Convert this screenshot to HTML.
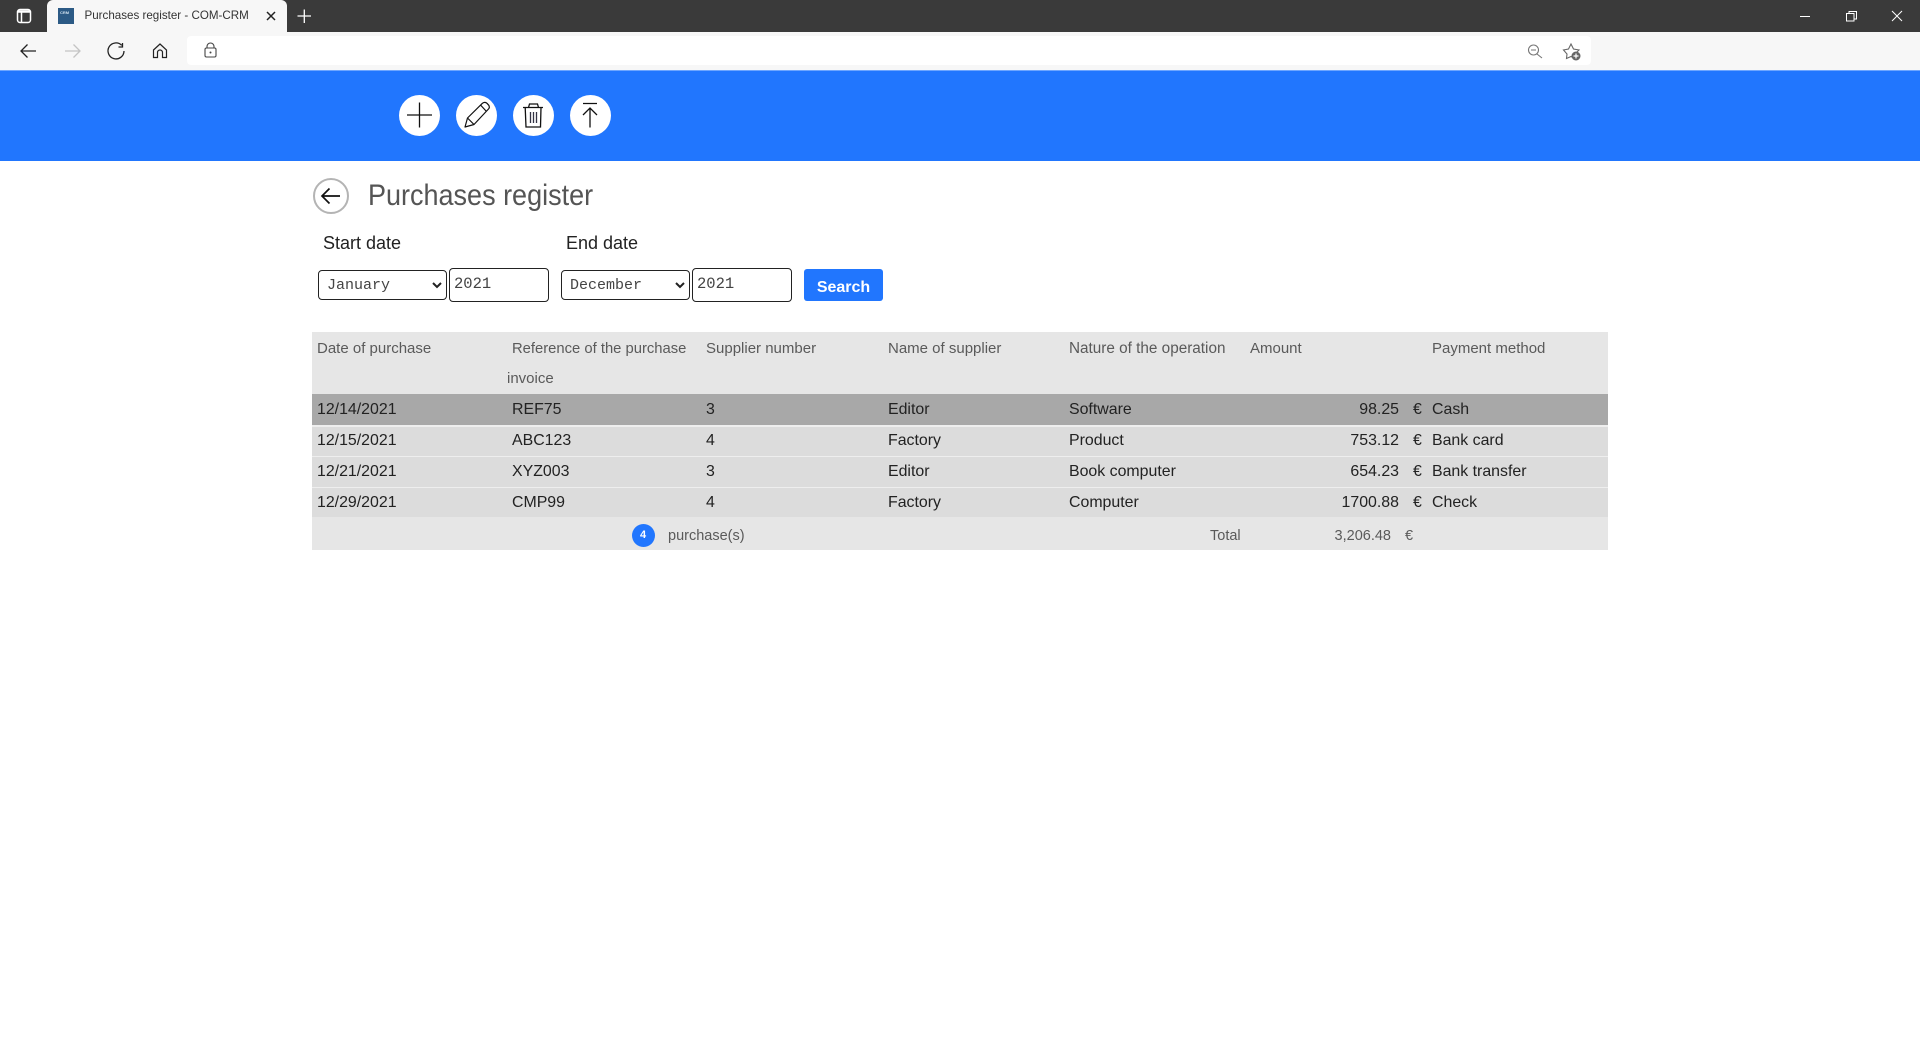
<!DOCTYPE html>
<html><head><meta charset="utf-8"><title>Purchases register - COM-CRM</title>
<style>
html,body{margin:0;padding:0;width:1920px;height:1040px;overflow:hidden;background:#fff;font-family:"Liberation Sans",sans-serif}
div,span{position:absolute;white-space:nowrap}
.h{font-size:15px;color:#5a5a5a;line-height:20px;height:20px}
.f{font-size:14.5px;color:#5a5a5a;line-height:20px;height:20px}
.d{font-size:15.9px;color:#222;line-height:20px;height:20px}
.r{text-align:right}
.sel,.inp{box-sizing:border-box;border:1.5px solid #222;background:#fff;font-family:"Liberation Mono",monospace;color:#444}
.sel{border-radius:4px;height:30px;top:270px;line-height:29px;padding-left:8px;font-size:15px}
.inp{border-radius:4px;height:34px;top:268px;line-height:31px;padding-left:4px;font-size:15.5px}
svg{position:absolute;left:0;top:0}
</style></head><body>
<div style="left:0;top:0;width:1920px;height:32px;background:#3a3a3a"></div>
<div style="left:47px;top:0;width:240px;height:32px;background:#f7f7f7;border-radius:6px 6px 0 0"></div>
<div style="left:58px;top:8px;width:16px;height:16px;background:#2c5a85"></div>
<div style="left:60px;top:10px;font-size:4px;color:#cfe0ee;font-weight:bold">CRM</div>
<div style="left:84.5px;top:8px;font-size:11.6px;line-height:16px;color:#333">Purchases register - COM-CRM</div>
<div style="left:0;top:32px;width:1920px;height:38px;background:#f7f7f7"></div>
<div style="left:187px;top:36px;width:1404px;height:29px;background:#fff;border-radius:4px"></div>
<div style="left:0;top:70px;width:1920px;height:91px;background:#2176fe"></div>
<div style="left:0;top:70px;width:1920px;height:1px;background:#6ea6ff"></div>

<div style="left:399px;top:94.5px;width:41px;height:41px;border-radius:50%;background:#fff"></div>
<div style="left:455.5px;top:94.5px;width:41px;height:41px;border-radius:50%;background:#fff"></div>
<div style="left:512.5px;top:94.5px;width:41px;height:41px;border-radius:50%;background:#fff"></div>
<div style="left:569.5px;top:94.5px;width:41px;height:41px;border-radius:50%;background:#fff"></div>
<div style="left:313px;top:178px;width:32px;height:32px;border-radius:50%;border:2px solid #b4b4b4;background:#fff"></div>

<div style="left:368px;top:178px;font-size:30px;line-height:36px;color:#555;transform:scaleX(.9);transform-origin:left center">Purchases register</div>
<div style="left:323px;top:232px;font-size:18px;line-height:22px;color:#222">Start date</div>
<div style="left:566px;top:232px;font-size:18px;line-height:22px;color:#222">End date</div>

<div class="sel" style="left:318px;width:129px">January</div>
<div class="inp" style="left:449px;width:100px">2021</div>
<div class="sel" style="left:561px;width:129px">December</div>
<div class="inp" style="left:692px;width:100px">2021</div>
<div style="left:804px;top:269px;width:79px;height:32px;background:#2176fe;border-radius:3px;color:#fff;font-weight:bold;font-size:16px;line-height:38px;text-align:center">Search</div>

<div style="left:312px;top:332px;width:1296px;height:62px;background:#e6e6e6"></div>
<div style="left:312px;top:394px;width:1296px;height:31px;background:#a8a8a8"></div>
<div style="left:312px;top:425px;width:1296px;height:2px;background:#eee"></div>
<div style="left:312px;top:427px;width:1296px;height:29px;background:#dcdcdc"></div>
<div style="left:312px;top:456px;width:1296px;height:1px;background:#eee"></div>
<div style="left:312px;top:457px;width:1296px;height:30px;background:#dcdcdc"></div>
<div style="left:312px;top:487px;width:1296px;height:1px;background:#eee"></div>
<div style="left:312px;top:488px;width:1296px;height:29px;background:#dcdcdc"></div>
<div style="left:312px;top:517px;width:1296px;height:33px;background:#e6e6e6"></div>

<div class="h" style="left:317px;top:339px">Date of purchase</div>
<div class="h" style="left:512px;top:339px;font-size:14.8px">Reference of the purchase</div>
<div class="h" style="left:507px;top:369px">invoice</div>
<div class="h" style="left:706px;top:339px">Supplier number</div>
<div class="h" style="left:888px;top:339px">Name of supplier</div>
<div class="h" style="left:1069px;top:339px;font-size:15.3px">Nature of the operation</div>
<div class="h" style="left:1250px;top:339px">Amount</div>
<div class="h" style="left:1432px;top:339px">Payment method</div>

<div class="d" style="left:317px;top:400px">12/14/2021</div>
<div class="d" style="left:512px;top:400px">REF75</div>
<div class="d" style="left:706px;top:400px">3</div>
<div class="d" style="left:888px;top:400px">Editor</div>
<div class="d" style="left:1069px;top:400px">Software</div>
<div class="d r" style="left:1250px;width:149px;top:400px">98.25</div>
<div class="d" style="left:1413px;top:400px">€</div>
<div class="d" style="left:1432px;top:400px">Cash</div>

<div class="d" style="left:317px;top:431px">12/15/2021</div>
<div class="d" style="left:512px;top:431px">ABC123</div>
<div class="d" style="left:706px;top:431px">4</div>
<div class="d" style="left:888px;top:431px">Factory</div>
<div class="d" style="left:1069px;top:431px">Product</div>
<div class="d r" style="left:1250px;width:149px;top:431px">753.12</div>
<div class="d" style="left:1413px;top:431px">€</div>
<div class="d" style="left:1432px;top:431px">Bank card</div>

<div class="d" style="left:317px;top:462px">12/21/2021</div>
<div class="d" style="left:512px;top:462px">XYZ003</div>
<div class="d" style="left:706px;top:462px">3</div>
<div class="d" style="left:888px;top:462px">Editor</div>
<div class="d" style="left:1069px;top:462px">Book computer</div>
<div class="d r" style="left:1250px;width:149px;top:462px">654.23</div>
<div class="d" style="left:1413px;top:462px">€</div>
<div class="d" style="left:1432px;top:462px">Bank transfer</div>

<div class="d" style="left:317px;top:493px">12/29/2021</div>
<div class="d" style="left:512px;top:493px">CMP99</div>
<div class="d" style="left:706px;top:493px">4</div>
<div class="d" style="left:888px;top:493px">Factory</div>
<div class="d" style="left:1069px;top:493px">Computer</div>
<div class="d r" style="left:1250px;width:149px;top:493px">1700.88</div>
<div class="d" style="left:1413px;top:493px">€</div>
<div class="d" style="left:1432px;top:493px">Check</div>

<div style="left:631.5px;top:524px;width:23px;height:23px;border-radius:50%;background:#2176fe;color:#fff;font-weight:bold;font-size:11px;line-height:23px;text-align:center">4</div>
<div class="f" style="left:668px;top:526px">purchase(s)</div>
<div class="f" style="left:1210px;top:526px">Total</div>
<div class="f r" style="left:1290px;width:101px;top:526px">3,206.48</div>
<div class="f" style="left:1405px;top:526px">€</div>

<svg width="1920" height="1040" viewBox="0 0 1920 1040" fill="none">
<g stroke="#fff" stroke-width="1.5">
<rect x="17.5" y="9.5" width="13" height="13" rx="2.5"/><path d="M17.5 11.5H30.5" stroke-width="2.5"/><path d="M21.5 12.5V22.5"/>
<path d="M297.5 16H311M304.3 9.5V23" stroke-width="1.3"/>
<path d="M1800 16.5H1810" stroke-width="1"/>
<path d="M1846.5 13.5h7.5v7.5h-7.5zM1849 13.5v-2h7.5v7.5h-2.5" stroke-width="1"/>
<path d="M1892 11L1902 21M1902 11L1892 21" stroke-width="1"/>
</g>
<path d="M267 12L275 20M275 12L267 20" stroke="#222" stroke-width="1.5"/>
<path d="M36 51H21M27.5 44.5L21 51L27.5 57.5" stroke="#222" stroke-width="1.3"/>
<path d="M80 51H65M73.5 44.5L80 51L73.5 57.5" stroke="#c4c4c4" stroke-width="1.3"/>
<path d="M121.7 45.3A8 8 0 1 0 124 51M122.5 43V47H118.5" stroke="#222" stroke-width="1.3"/>
<path d="M153.5 50L160 44L166.5 50V57.5H162.5V52.5A2.5 2.5 0 0 0 157.5 52.5V57.5H153.5Z" stroke="#222" stroke-width="1.2"/>
<rect x="205" y="48" width="11" height="9" rx="1.5" stroke="#444" stroke-width="1.1"/>
<path d="M207 48V46.5A3.5 3.5 0 0 1 214 46.5V48" stroke="#444" stroke-width="1.1"/>
<circle cx="210.5" cy="52.5" r="1" fill="#444"/>
<circle cx="1533.5" cy="50" r="5" stroke="#777" stroke-width="1.1"/>
<path d="M1531 50H1536M1537 54L1542 58" stroke="#777" stroke-width="1.1"/>
<path d="M1571 44L1573.5 49L1579 50L1575 54L1576 59L1571 56.5L1566.5 58.5L1567 54L1563.5 50L1568.5 49Z" stroke="#666" stroke-width="1.1"/>
<circle cx="1576" cy="56" r="4.5" fill="#666"/>
<path d="M1573.5 56H1578.5M1576 53.5V58.5" stroke="#fff" stroke-width="1.2"/>

<path d="M407 115H432M419.5 102.5V127.5" stroke="#111" stroke-width="1.3"/>
<path d="M465 127L467.5 118L482.5 103.2Q485 101.5 487 103.3L488.8 105.3Q490 107.5 488.5 109L474 124.5ZM467.5 118L474 124.5M480.5 105L486.5 111.5" stroke="#111" stroke-width="1.2" stroke-linejoin="round"/>
<path d="M523 107.5H543M528.5 107.5L529.5 104H537.5L538.5 107.5M525.2 107.5L526 127H540.5L541 107.5" stroke="#111" stroke-width="1.3"/>
<path d="M530.5 112V123M533.5 112V123M536.5 112V123" stroke="#334" stroke-width="1.3"/>
<path d="M583 103.5H597M590 108V127.5M583 115L590 108L597 115" stroke="#111" stroke-width="1.3"/>
<path d="M340 196H322M329.5 188.5L322 196L329.5 203.5" stroke="#111" stroke-width="1.7"/>
<path d="M433 283L437 287L441 283M676 283L680 287L684 283" stroke="#222" stroke-width="2"/>
</svg>
</body></html>
